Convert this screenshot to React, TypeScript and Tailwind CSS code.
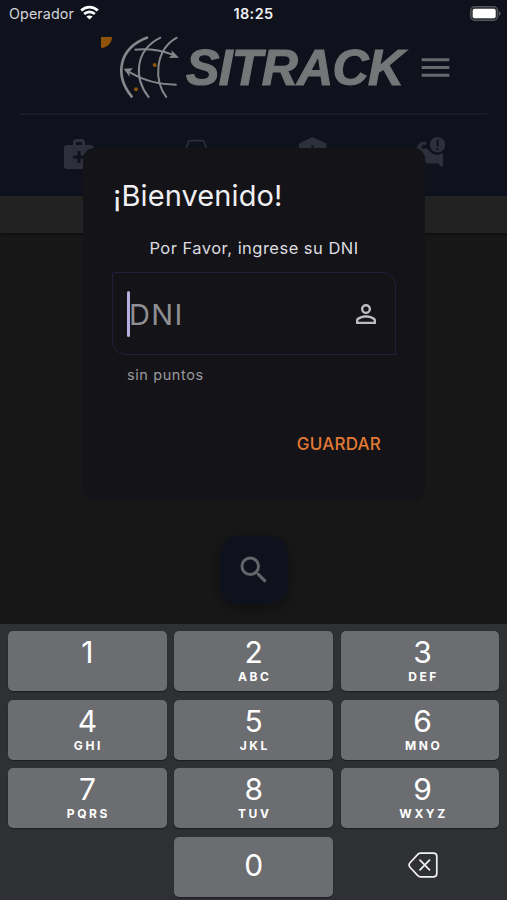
import React from "react";
import { MdMedicalServices, MdMenu, MdPersonOutline, MdSearch } from "react-icons/md";

const KEYS: [string, string][] = [
  ["1", ""],
  ["2", "ABC"],
  ["3", "DEF"],
  ["4", "GHI"],
  ["5", "JKL"],
  ["6", "MNO"],
  ["7", "PQRS"],
  ["8", "TUV"],
  ["9", "WXYZ"],
];

function StatusBar() {
  return (
    <div className="grid h-[28px] grid-cols-3 items-center text-[#d4d5d8]">
      <div className="flex items-center gap-[6px] pl-[9px]">
        <span className="text-[14.3px] leading-none tracking-[0.1px]">Operador</span>
        <svg width="19" height="15" viewBox="0 0 19 15" className="-mt-[2px]" fill="none" stroke="#fff">
          <path d="M1.200 5.600C6 .9 13 .9 17.800 5.600" strokeWidth="2.800" />
          <path d="M4.200 9c3-2.900 7.600-2.900 10.600 0" strokeWidth="2.600" />
          <path d="M9.500 14.500 6.400 11.500c1.700-1.500 4.500-1.500 6.200 0z" fill="#fff" stroke="none" />
        </svg>
      </div>
      <span className="text-center text-[14.5px] leading-none font-semibold tracking-[0.4px] text-[#f0f0f2]">18:25</span>
      <div className="flex items-center justify-end pr-[6px]">
        <svg width="31" height="15" viewBox="0 0 31 15" className="-mt-[2px]">
          <rect x="0.700" y="0.700" width="27" height="13.600" rx="4" fill="#2d2e35" stroke="#55565b" strokeWidth="1.300" />
          <rect x="2.700" y="2.700" width="23" height="9.600" rx="2" fill="#fff" />
          <path d="M29 5.200c2 .8 2 3.800 0 4.600z" fill="#5d5e63" />
        </svg>
      </div>
    </div>
  );
}

function Globe() {
  return (
    <svg width="82" height="66" viewBox="30 18 246 198" fill="none">
      <path d="M33 27H66C66 44 55 56 36 60L33 58Z" fill="#8e5208" />
      <g stroke="#85878b">
        <path d="M174 28C82 62 74 145 127 208" strokeWidth="8" />
        <path d="M213 28C134 66 130 150 177 209" strokeWidth="6" />
        <path d="M262 28C192 66 192 160 230 209" strokeWidth="6" />
        <path d="M134 65C175 61 211 66 248 80" strokeWidth="6" />
        <path d="M118 132C160 158 208 170 260 170" strokeWidth="6" />
      </g>
      <path d="M244 66 267 89 236 90 247 80Z" fill="#85878b" />
      <path d="M101 122 129 121 118 132 119 147Z" fill="#85878b" />
      <circle cx="194" cy="111" r="6" fill="#8e5208" />
      <circle cx="138" cy="184" r="6" fill="#8e5208" />
    </svg>
  );
}

function Header() {
  return (
    <header className="flex h-[196px] flex-col bg-[#0f111c]">
      <StatusBar />
      <div className="flex h-[85px] items-start pt-[6px] pl-[100px]">
        <Globe />
        <span className="ml-[4px] w-[236px] pt-[6px] font-['Liberation_Sans',Arial,sans-serif] text-[50px] leading-[56px] font-bold tracking-[-0.700px] whitespace-nowrap text-[#747678] italic [-webkit-text-stroke:1.200px_#747678]">
          SITRACK
        </span>
        <MdMenu className="-ml-[5px] mt-[15px] size-[37px] text-[#66686e]" />
      </div>
      <div className="mx-[20px] h-[2px] bg-[#1a1b25]" />
      <nav className="grid grid-cols-4 pt-[21px] pr-[19px] pl-[20px] text-[#2d303b]">
        <MdMedicalServices className="mx-auto size-[36px]" />
        <svg width="28" height="36" viewBox="0 0 28 36" className="mx-auto" fill="none" stroke="currentColor" strokeWidth="1.600">
          <path d="M4 13 6.500 5.700Q7 4.600 8 4.600H20.500Q21.500 4.600 22 5.700L24.500 13V26H4Z" />
        </svg>
        <svg width="28" height="36" viewBox="0 0 28 36" className="mx-auto" fill="currentColor">
          <path d="M13.500 1 27.500 7.500V12H0V7.500ZM3 14H8V28H3ZM11 14H17V28H11ZM20 14H25V28H20Z" />
          <circle cx="13.500" cy="10.500" r="1.300" fill="#0f111c" />
        </svg>
        <svg width="30" height="36" viewBox="0 0 30 36" className="mx-auto" fill="currentColor">
          <circle cx="22.500" cy="8.700" r="7.700" />
          <path d="M21.600 3.600h2v7h-2zM21.600 12h2v2h-2z" fill="#0f111c" />
          <path d="M1.500 12.500 4 8Q5.500 5.700 8 5.700H11.500V8.700H7.500L6 12.500H12L17 17.500Q19.500 18.500 23.500 19L26.500 17.500H28V30.500H25.500L23 27.500H12L5 18Z" />
        </svg>
      </nav>
    </header>
  );
}

function WelcomeDialog() {
  return (
    <section className="absolute top-[148px] left-[83px] flex h-[352px] w-[342px] flex-col rounded-[11px] bg-[#141318] pr-[29px] pl-[29px]">
      <h1 className="mt-[29px] pl-[1px] text-[29px] leading-[38px] tracking-[0.1px] text-[#f0eff2]">¡Bienvenido!</h1>
      <p className="mt-[22px] text-center text-[16.5px] leading-[22px] tracking-[0.480px] text-[#dddce0]">
        Por Favor, ingrese su DNI
      </p>
      <div className="mt-[13px] flex h-[83px] items-center rounded-tl-[2px] rounded-tr-[14px] rounded-bl-[14px] border border-[#20203d] pr-[14px] pl-[14px]">
        <span className="h-[46px] w-[3px] rounded-full bg-[#b9aee0]" />
        <span className="-ml-[1px] flex-1 pt-px text-[29px] leading-none tracking-[1.300px] text-[#8f8e92]">DNI</span>
        <MdPersonOutline className="size-[30px] text-[#bdbcc2]" />
      </div>
      <p className="mt-[10px] pl-[15px] text-[14.5px] leading-[20px] tracking-[0.600px] text-[#9b9a9f]">sin puntos</p>
      <button className="mt-[47px] mr-[15px] self-end text-[17px] leading-[24px] font-medium tracking-[0.200px] text-[#e27a33]">GUARDAR</button>
    </section>
  );
}

function Key({ digit, letters, shifted = false }: { digit: string; letters: string; shifted?: boolean }) {
  return (
    <button
      className={`flex h-[60px] flex-col items-center rounded-[5px] bg-[#6c6d71] text-white shadow-[0_1px_1px_#1c1d20] ${shifted ? "pl-[5px]" : ""}`}
    >
      <span className={digit === "0" ? "text-[30px] leading-[56px]" : "pt-[3px] text-[30px] leading-[36px]"}>{digit}</span>
      {letters && <span className="pt-px pl-[2px] text-[12px] leading-[12px] font-bold tracking-[2.600px]">{letters}</span>}
    </button>
  );
}

function Keyboard() {
  return (
    <div className="grid h-[276px] grid-cols-3 content-start gap-x-[7.500px] gap-y-[8.500px] overflow-hidden bg-[#2f3034] pt-[7px] pr-[7.500px] pl-[8px]">
      {KEYS.map(([digit, letters], index) => (
        <Key key={digit} digit={digit} letters={letters} shifted={index % 3 === 2} />
      ))}
      <span />
      <Key digit="0" letters="" />
      <div className="flex items-center justify-center pb-[3px] pl-[5px]">
        <svg width="30" height="26" viewBox="0 0 30 26" fill="none" stroke="#f1f1f2" strokeWidth="1.700" strokeLinecap="round" strokeLinejoin="round">
          <path d="M12.500 1.200H25.500Q28.800 1.200 28.800 4.500V21.500Q28.800 24.800 25.500 24.800H12.500Q11 24.800 9.800 23.600L1.800 15Q.4 13 1.800 11L9.800 2.400Q11 1.200 12.500 1.200ZM12 8.200 21.500 17.800M21.500 8.200 12 17.800" />
        </svg>
      </div>
    </div>
  );
}

export default function App() {
  return (
    <main className="relative flex h-[900px] w-[507px] flex-col overflow-hidden bg-[#171717] font-[Inter,sans-serif]">
      <Header />
      <div className="h-[37px] bg-[#222222] shadow-[0_1px_2px_#0c0c0c]" />
      <div className="flex flex-1 items-end justify-center pb-[20px]">
        <button className="flex size-[68px] items-center justify-center rounded-[18px] bg-[#0f111c] shadow-[0_4px_8px_#101010]">
          <MdSearch className="size-[36px] text-[#65666b]" />
        </button>
      </div>
      <WelcomeDialog />
      <Keyboard />
    </main>
  );
}
